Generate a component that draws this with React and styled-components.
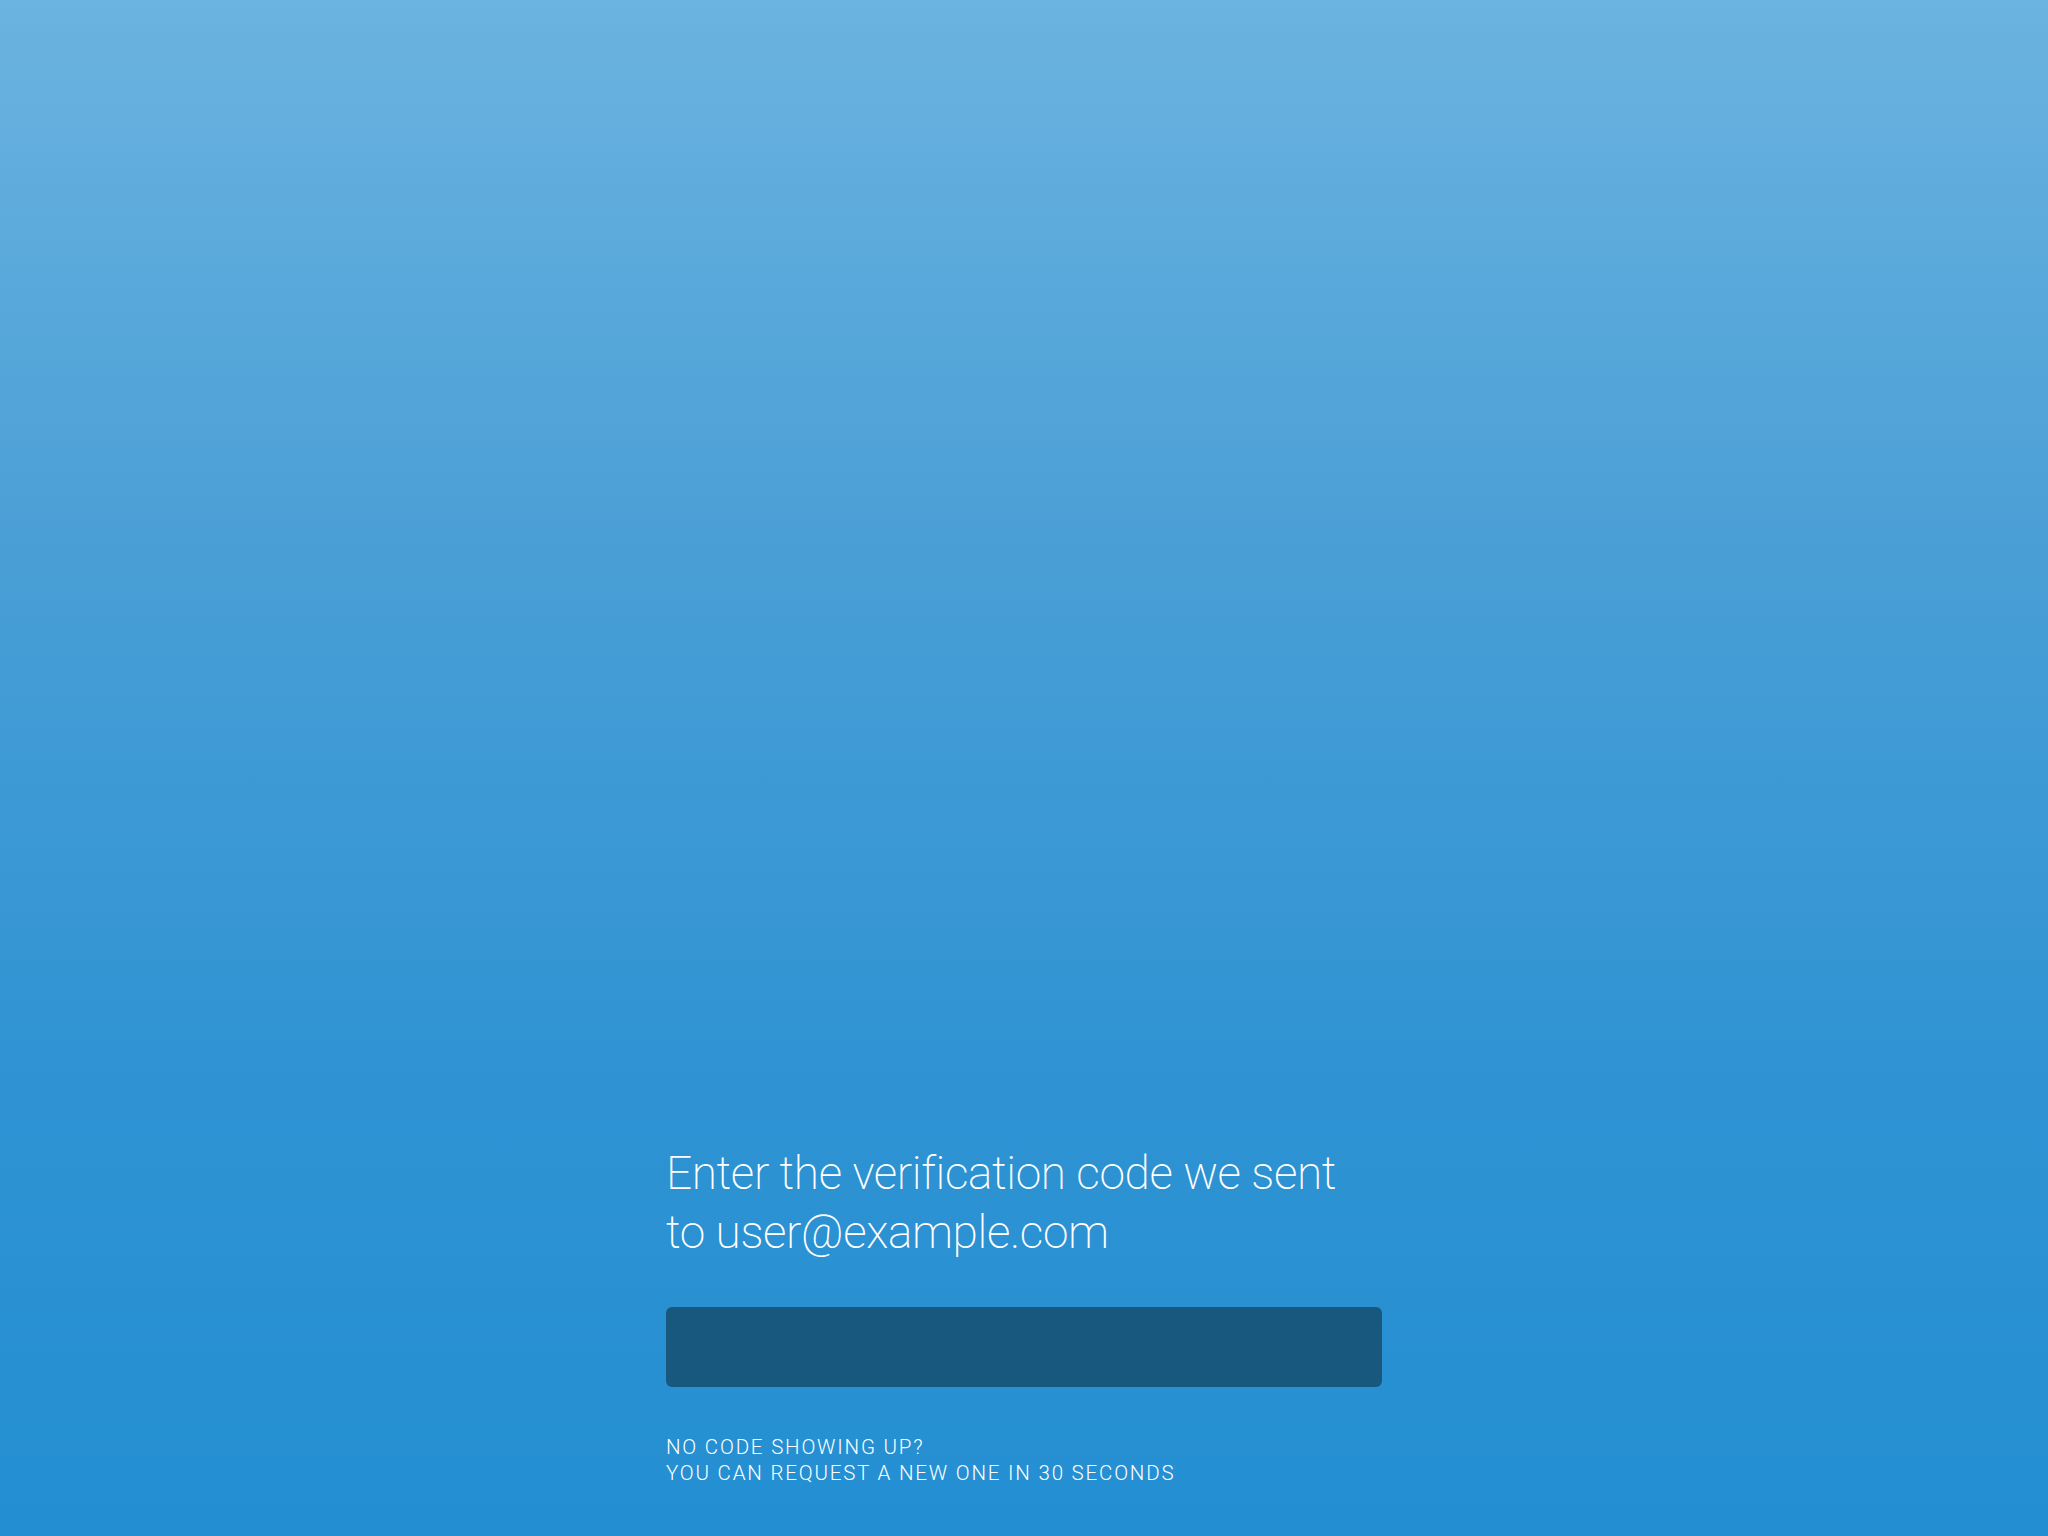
import styled, { createGlobalStyle } from "styled-components";

const GlobalStyle = createGlobalStyle`
	html, body {
		margin: 0;
		padding: 0;
	}
	body {
		font-family: Roboto, "Liberation Sans", sans-serif;
	}
`;

const Screen = styled.div`
	min-height: 100vh;
	display: flex;
	flex-direction: column;
	justify-content: flex-end;
	align-items: center;
	padding-bottom: 50px;
	box-sizing: border-box;
	background: linear-gradient(180deg, #6bb3e0 0%, #4a9fd6 35%, #2f93d3 70%, #238fd2 100%);
`;

const Form = styled.div`
	width: 716px;
	display: flex;
	flex-direction: column;
`;

const Title = styled.h1`
	margin: 0 0 45px;
	font-size: 46px;
	font-weight: 200;
	line-height: 59px;
	color: #ffffff;
	letter-spacing: -0.4px;
`;

const CodeInput = styled.input`
	height: 80px;
	border: none;
	border-radius: 6px;
	background: #18587f;
	color: #ffffff;
	font-family: inherit;
	font-size: 32px;
	padding: 0 20px;
	outline: none;
`;

const Hint = styled.p`
	margin: 47px 0 0;
	font-size: 20.5px;
	line-height: 26px;
	font-weight: 300;
	color: #ffffff;
	text-transform: uppercase;
	letter-spacing: 1.8px;
`;

const App = () => {
	return (
		<>
			<GlobalStyle />
			<Screen>
				<Form>
					<Title>
						Enter the verification code we sent
						<br />
						to user@example.com
					</Title>
					<CodeInput type="text" />
					<Hint>
						No code showing up?
						<br />
						You can request a new one in 30 seconds
					</Hint>
				</Form>
			</Screen>
		</>
	);
};

export default App;
